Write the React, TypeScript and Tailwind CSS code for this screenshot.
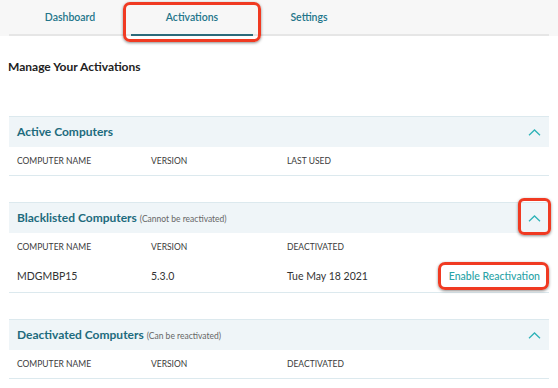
import React from 'react';

const teal = 'text-[#1d6b7d]';

const ChevronUp = () => (
    <svg width="13" height="7" viewBox="0 0 13 7" fill="none">
        <path d="M1 6.2 6.5 1 12 6.2" stroke="#2fb3b8" strokeWidth="1.3" />
    </svg>
);

interface Row {
    name: string;
    version: string;
    date: string;
}

interface SectionProps {
    title: string;
    note?: string;
    thirdCol: string;
    rows: Row[];
}

const Section: React.FC<SectionProps> = ({ title, note, thirdCol, rows }) => (
    <div className="border-b border-[#dce9ee]">
        <div className="h-[31px] flex items-center justify-between bg-[#eff5f8] border-t border-[#dce9ee] pl-[8px] pr-[8px]">
            <div className="flex items-baseline gap-[3px]">
                <span className={`text-[12px] font-bold ${teal}`}>{title}</span>
                {note && <span className="text-[8.5px] text-[#666]">{note}</span>}
            </div>
            <ChevronUp />
        </div>
        <div className="h-[28px] flex items-center pl-[8px] text-[8.5px] text-[#3a3a3a] uppercase">
            <span className="w-[134px]">Computer Name</span>
            <span className="w-[136px]">Version</span>
            <span>{thirdCol}</span>
        </div>
        {rows.map((r) => (
            <div key={r.name} className="h-[31px] flex items-center pl-[8px] pr-[9px] text-[10.5px] text-[#333]">
                <span className="w-[134px]">{r.name}</span>
                <span className="w-[136px]">{r.version}</span>
                <span className="flex-1">{r.date}</span>
                <span className="text-[10.5px] text-[#2aa3a6] font-medium">Enable Reactivation</span>
            </div>
        ))}
    </div>
);

export default function App() {
    const tabs = [
        { label: 'Dashboard', w: 'w-[122px]' },
        { label: 'Activations', w: 'w-[122px]' },
        { label: 'Settings', w: 'w-[112px]' },
    ];

    return (
        <div className="relative w-[558px] h-[388px] overflow-hidden bg-white font-['Lato',sans-serif]">
            <div className="h-[36px] bg-[#f7f7f7] px-[9px]">
                <div className="h-full flex border-b-2 border-[#e6e6e6]">
                    {tabs.map((t) => (
                        <div
                            key={t.label}
                            className={`${t.w} text-center h-[36px] pt-[10px] text-[10.5px] font-semibold text-[#23758a] ${
                                t.label === 'Activations' ? 'border-b-2 border-[#2c6b7b]' : ''
                            }`}
                        >
                            {t.label}
                        </div>
                    ))}
                </div>
            </div>

            <div className="pt-[22px] pl-[8px] text-[12px] font-bold text-[#222]">Manage Your Activations</div>

            <div className="mx-[9px] mt-[40px] flex flex-col gap-[26px]">
                <Section title="Active Computers" thirdCol="Last Used" rows={[]} />
                <Section
                    title="Blacklisted Computers"
                    note="(Cannot be reactivated)"
                    thirdCol="Deactivated"
                    rows={[{ name: 'MDGMBP15', version: '5.3.0', date: 'Tue May 18 2021' }]}
                />
                <Section title="Deactivated Computers" note="(Can be reactivated)" thirdCol="Deactivated" rows={[]} />
            </div>

            {/* annotation highlights */}
            <div className="absolute left-[123px] top-[2px] w-[138px] h-[40px] rounded-[7px] border-[3px] border-[#f03a22] shadow-[0_1px_3px_rgba(0,0,0,0.45)]" />
            <div className="absolute left-[518px] top-[198px] w-[33px] h-[37px] rounded-[6px] border-[3px] border-[#f03a22] shadow-[0_1px_3px_rgba(0,0,0,0.45)]" />
            <div className="absolute left-[438px] top-[262px] w-[111px] h-[28px] rounded-[7px] border-[3px] border-[#f03a22] shadow-[0_1px_3px_rgba(0,0,0,0.45)]" />
        </div>
    );
}
